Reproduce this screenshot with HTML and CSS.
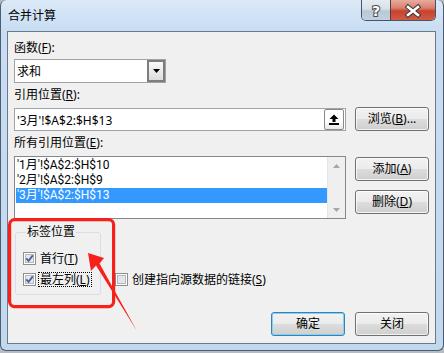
FILE: index.html
```html
<!DOCTYPE html>
<html lang="zh-CN">
<head>
    <meta charset="UTF-8">
    <title>合并计算</title>
    <link rel="stylesheet" href="styles.css">
</head>
<body>
    <div class="window">
        <div class="titlebar">
            <span class="title">合并计算</span>
            <div class="caption">
                <div class="cap help">
                    <svg width="28" height="20" viewBox="0 0 28 20"><text x="14" y="16" text-anchor="middle" class="cap-glyph">?</text></svg>
                </div>
                <div class="cap close">
                    <svg width="44" height="20" viewBox="0 0 44 20">
                        <path d="M17 7 L27 15 M27 7 L17 15" stroke="#3a3a3a" stroke-width="4.6" stroke-linecap="square"/>
                        <path d="M17 7 L27 15 M27 7 L17 15" stroke="#fff" stroke-width="2.6" stroke-linecap="square"/>
                    </svg>
                </div>
            </div>
        </div>

        <div class="client">
            <div class="label">函数(<u>F</u>):</div>
            <div class="combo">
                <span class="combo-text">求和</span>
                <div class="drop">
                    <svg width="7" height="4" viewBox="0 0 7 4"><path d="M0 0H7L3.5 4Z" fill="#000"/></svg>
                </div>
            </div>

            <div class="label gap">引用位置(<u>R</u>):</div>
            <div class="row">
                <div class="textbox">
                    <span class="field-text">'3月'!$A$2:$H$13</span>
                    <div class="collapse-btn">
                        <svg width="10" height="11" viewBox="0 0 10 11"><path d="M5 0.5 L9.5 5 H6.5 V8 H3.5 V5 H0.5 Z" fill="#000"/><rect x="0" y="9" width="10" height="2" fill="#000"/></svg>
                    </div>
                </div>
                <button class="btn">浏览(<u>B</u>)...</button>
            </div>

            <div class="label gap">所有引用位置(<u>E</u>):</div>
            <div class="row list-row">
                <div class="listbox">
                    <div class="items">
                        <div class="item">'1月'!$A$2:$H$10</div>
                        <div class="item">'2月'!$A$2:$H$9</div>
                        <div class="item selected">'3月'!$A$2:$H$13</div>
                    </div>
                    <div class="scrollbar">
                        <div class="sb-arrow">
                            <svg width="7" height="4" viewBox="0 0 7 4"><path d="M0 4H7L3.5 0Z" fill="#a6a6a6"/></svg>
                        </div>
                        <div class="sb-arrow">
                            <svg width="7" height="4" viewBox="0 0 7 4"><path d="M0 0H7L3.5 4Z" fill="#a6a6a6"/></svg>
                        </div>
                    </div>
                </div>
                <div class="btn-col">
                    <button class="btn">添加(<u>A</u>)</button>
                    <button class="btn">删除(<u>D</u>)</button>
                </div>
            </div>

            <div class="options">
                <fieldset class="group">
                    <legend>标签位置</legend>
                    <div class="check">
                        <svg class="box" width="13" height="13" viewBox="0 0 13 13"><rect x="0.5" y="0.5" width="12" height="12" fill="#fff" stroke="#8e8f8f"/><rect x="2.5" y="2.5" width="8" height="8" fill="#e4e8ee" stroke="#b4b9c0"/><path d="M3.2 6.3 L5.6 8.9 L9.8 3.4" fill="none" stroke="#4a5f97" stroke-width="1.8"/></svg>
                        <span class="check-text">首行(<u>T</u>)</span>
                    </div>
                    <div class="check">
                        <svg class="box" width="13" height="13" viewBox="0 0 13 13"><rect x="0.5" y="0.5" width="12" height="12" fill="#fff" stroke="#8e8f8f"/><rect x="2.5" y="2.5" width="8" height="8" fill="#e4e8ee" stroke="#b4b9c0"/><path d="M3.2 6.3 L5.6 8.9 L9.8 3.4" fill="none" stroke="#4a5f97" stroke-width="1.8"/></svg>
                        <span class="check-text focused">最左列(<u>L</u>)</span>
                    </div>
                </fieldset>
                <div class="check link-check">
                    <svg class="box" width="13" height="13" viewBox="0 0 13 13"><rect x="0.5" y="0.5" width="12" height="12" fill="#fff" stroke="#8e8f8f"/><rect x="2.5" y="2.5" width="8" height="8" fill="#e2e5ea" stroke="#b4b9c0"/></svg>
                    <span class="check-text">创建指向源数据的链接(<u>S</u>)</span>
                </div>
            </div>

            <div class="footer">
                <button class="btn default">确定</button>
                <button class="btn">关闭</button>
            </div>
        </div>
    </div>

    <svg class="annotation" width="444" height="353" viewBox="0 0 444 353">
        <rect x="9.6" y="219.6" width="104" height="87" rx="5" fill="none" stroke="#f7201b" stroke-width="3.2"/>
        <polygon points="88,253 104,258 99.5,263.5 137,331 96,265.5 91,271" fill="#f7201b"/>
    </svg>
</body>
</html>
```

FILE: styles.css
```css
/* dialog window */
body {
    margin: 0;
    background: #b7bcc2;
    font-family: "Noto Sans", "Noto Sans CJK SC", sans-serif;
    font-size: 12px;
    color: #000;
}

.window {
    width: 444px;
    height: 351px;
    box-sizing: border-box;
    border: 1px solid #4d5d70;
    border-top: 0;
    border-radius: 6px;
    padding: 0 7px 6px 6px;
    background: linear-gradient(to bottom, #dbe9f7 0, #c8ddf3 31px, #c2d8ef 100%);
    display: flex;
    flex-direction: column;
}

.titlebar {
    height: 31px;
    display: flex;
    align-items: flex-start;
}

.title {
    padding: 8px 0 0 1px;
    line-height: 16px;
    color: #000;
}

.caption {
    margin-left: auto;
    height: 21px;
    display: flex;
    box-sizing: border-box;
    border: 1px solid #44546a;
    border-top: 0;
    border-radius: 0 0 5px 5px;
    overflow: hidden;
}

.cap {
    height: 20px;
}

.help {
    width: 28px;
    background: linear-gradient(to bottom, #e6ebf1 0%, #d8e0e9 45%, #b9c8d7 55%, #c3d1df 100%);
}

.close {
    width: 44px;
    border-left: 1px solid #5a3a3a;
    background: linear-gradient(to bottom, #e8ab9c 0%, #d9806f 40%, #c7432e 55%, #d35a43 100%);
}

.cap svg {
    display: block;
}

.cap-glyph {
    font-family: "DejaVu Sans", sans-serif;
    font-weight: bold;
    font-size: 14px;
    fill: #fff;
    stroke: #4a4a4a;
    stroke-width: 2px;
    paint-order: stroke;
}

.client {
    flex: 1;
    background: #f0f0f0;
    border: 1px solid #6b7a8b;
    padding: 8px 6px 7px 6px;
    display: flex;
    flex-direction: column;
}

.label {
    line-height: 16px;
}

.label.gap {
    margin-top: 4px;
}

.combo {
    margin-top: 3px;
    width: 152px;
    height: 24px;
    box-sizing: border-box;
    border: 1px solid #a2a2a2;
    background: #fff;
    display: flex;
    align-items: center;
}

.combo-text {
    flex: 1;
    padding-left: 2px;
}

.drop {
    width: 18px;
    height: 22px;
    box-sizing: border-box;
    border: 2px solid #7d7d7d;
    background: linear-gradient(to bottom, #fafafa, #dcdcdc);
    display: flex;
    align-items: center;
    justify-content: center;
}

.row {
    margin-top: 4px;
    display: flex;
    gap: 9px;
    align-items: flex-start;
}

.textbox {
    flex: 1;
    margin-top: 1px;
    height: 23px;
    box-sizing: border-box;
    border: 1px solid #a0a4aa;
    background: #fff;
    display: flex;
    align-items: center;
}

.field-text {
    flex: 1;
    padding-left: 2px;
}

.collapse-btn {
    width: 20px;
    height: 21px;
    margin-right: 1px;
    box-sizing: border-box;
    border: 1px solid #8a8a8a;
    border-radius: 2px;
    background: linear-gradient(to bottom, #fff 0%, #fff 60%, #e6e6e6 100%);
    display: flex;
    align-items: center;
    justify-content: center;
}

.btn {
    width: 74px;
    height: 24px;
    box-sizing: border-box;
    padding: 0;
    border: 1px solid #707070;
    border-radius: 3px;
    background: linear-gradient(to bottom, #f2f2f2 0%, #ebebeb 50%, #dddddd 50%, #cfcfcf 100%);
    box-shadow: inset 0 0 0 1px rgba(255, 255, 255, 0.75);
    font-family: inherit;
    font-size: 12px;
    color: #000;
    line-height: 16px;
}

.btn.default {
    border-color: #3c7fb1;
    box-shadow: inset 0 0 0 1px #7fd3f7;
}

.list-row {
    margin-top: 5px;
}

.listbox {
    flex: 1;
    height: 63px;
    box-sizing: border-box;
    border: 1px solid #828790;
    background: #fff;
    display: flex;
}

.items {
    flex: 1;
    padding: 1px 0 0 1px;
}

.item {
    height: 15px;
    line-height: 15px;
    padding-left: 1px;
    font-family: Roboto, "Noto Sans CJK SC", sans-serif;
}

.item.selected {
    background: #3399ff;
    color: #fff;
}

.scrollbar {
    width: 18px;
    background: #efefef;
    border-left: 1px solid #e4e4e4;
    box-sizing: border-box;
    display: flex;
    flex-direction: column;
    justify-content: space-between;
}

.sb-arrow {
    height: 17px;
    display: flex;
    align-items: center;
    justify-content: center;
}

.btn-col {
    margin-top: 1px;
    display: flex;
    flex-direction: column;
    gap: 9px;
}

.options {
    margin-top: 5px;
    display: flex;
    align-items: flex-start;
}

.group {
    margin: 0 0 0 1px;
    width: 86px;
    box-sizing: border-box;
    border: 1px solid #d5dfe5;
    border-radius: 3px;
    padding: 8px 0 5px 7px;
    min-width: 0;
}

.group legend {
    margin-left: 3px;
    padding: 0 1px;
    line-height: 16px;
}

.check {
    height: 20px;
    display: flex;
    align-items: center;
}

.check + .check {
    margin-top: 1px;
}

.box {
    flex: none;
    margin-right: 2px;
}

.check-text {
    border: 1px dotted transparent;
    padding: 0 1px;
    line-height: 13px;
    white-space: nowrap;
}

.check-text.focused {
    border-color: #000;
}

.link-check {
    margin: 45px 0 0 14px;
}

.footer {
    margin-top: auto;
    display: flex;
    justify-content: flex-end;
    gap: 10px;
}

.annotation {
    position: absolute;
    left: 0;
    top: 0;
    pointer-events: none;
}
```
